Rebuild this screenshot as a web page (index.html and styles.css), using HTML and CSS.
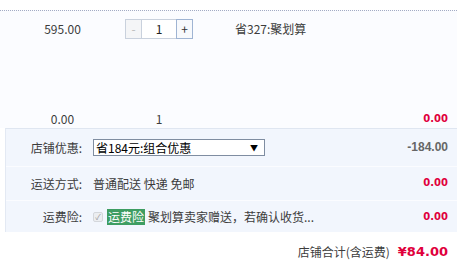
FILE: index.html
```html
<!DOCTYPE html>
<html>

<head>
    <meta charset="UTF-8">
    <title>购物车</title>
    <link rel="stylesheet" href="styles.css">
</head>

<body>
    <div class="order">
        <div class="item">
            <div class="item-top">
                <div class="col-price">595.00</div>
                <div class="qty">
                    <span class="qty-minus">-</span>
                    <span class="qty-num">1</span>
                    <span class="qty-plus">+</span>
                </div>
                <div class="col-promo">省327:聚划算</div>
            </div>
            <div class="item-bottom">
                <div class="col-price">0.00</div>
                <div class="col-qty">1</div>
                <div class="col-sum">0.00</div>
            </div>
        </div>
        <div class="shop">
            <div class="shop-row first">
                <div class="shop-label">店铺优惠:</div>
                <div class="shop-value">
                    <div class="select">省184元:组合优惠<span class="select-arrow">▼</span></div>
                </div>
                <div class="shop-price gray">-184.00</div>
            </div>
            <div class="shop-row">
                <div class="shop-label">运送方式:</div>
                <div class="shop-value">普通配送 快递 免邮</div>
                <div class="shop-price">0.00</div>
            </div>
            <div class="shop-row last">
                <div class="shop-label">运费险:</div>
                <div class="shop-value">
                    <span class="check">✓</span>
                    <span class="tag">运费险</span>
                    <span>聚划算卖家赠送，若确认收货...</span>
                </div>
                <div class="shop-price">0.00</div>
            </div>
        </div>
        <div class="total">
            <span>店铺合计(含运费)</span>
            <span class="total-price">¥84.00</span>
        </div>
    </div>
</body>

</html>
```

FILE: styles.css
```css
* {
    margin: 0;
    padding: 0;
}

body {
    background: #fff;
    font-family: "Noto Sans CJK SC", "Liberation Sans", sans-serif;
    font-size: 12px;
    color: #3c3c3c;
}

.order {
    width: 457px;
    padding-top: 10px;
}

/* 商品 */
.item {
    height: 117px;
    border-top: 1px dotted #a3abc4;
    background-color: #fbfcff;
    display: flex;
    flex-direction: column;
    justify-content: space-between;
}

.item-top {
    display: flex;
    align-items: center;
    padding-top: 8px;
}

.col-price {
    width: 125px;
    text-align: center;
    line-height: 20px;
}

.qty {
    display: flex;
    width: 68px;
    height: 20px;
    line-height: 18px;
}

.qty span {
    display: block;
    height: 18px;
    text-align: center;
    border: 1px solid #c9d1dd;
}

.qty-minus {
    width: 15px;
    color: #bbb;
    background-color: #f4f5f7;
}

.qty-num {
    width: 34px;
    color: #222;
    background-color: #fff;
    border-left: 0 none !important;
    border-right: 0 none !important;
}

.qty-plus {
    width: 15px;
    color: #333;
    background-color: #f7f9fc;
    border-color: #9fb4d3 !important;
}

.col-promo {
    margin-left: 42px;
    line-height: 20px;
}

.item-bottom {
    display: flex;
    align-items: center;
    height: 18px;
    line-height: 18px;
}

.col-qty {
    width: 68px;
    text-align: center;
}

.col-sum,
.shop-price {
    margin-left: auto;
    padding-right: 9px;
    font-family: "DejaVu Sans", sans-serif;
    font-weight: bold;
    font-size: 10px;
    color: #e0003c;
}

/* 店铺 */
.shop {
    margin-left: 5px;
    border-left: 1px solid #e3e9f3;
    border-top: 1px solid #dfe6f1;
    background-color: #f2f6fd;
}

.shop-row {
    display: flex;
    align-items: center;
    height: 33px;
    border-bottom: 1px solid #fbfcff;
}

.shop-row.first {
    height: 37px;
}

.shop-row.last {
    height: 31px;
    border-bottom: 0 none;
}

.shop-label {
    width: 76px;
    text-align: right;
}

.shop-value {
    margin-left: 11px;
    display: flex;
    align-items: center;
}

.shop-price {
    align-self: flex-start;
    padding-top: 10px;
}

.shop-price.gray {
    padding-top: 11px;
    font-family: "Liberation Sans", sans-serif;
    font-size: 12px;
    color: #666;
}

.select {
    position: relative;
    width: 168px;
    height: 15px;
    line-height: 15px;
    padding-left: 2px;
    border: 1px solid #7f8da1;
    background-color: #fff;
    color: #000;
}

.select-arrow {
    position: absolute;
    right: 6px;
    top: 0;
    font-size: 8px;
}

.check {
    display: block;
    width: 8px;
    height: 8px;
    line-height: 8px;
    font-size: 8px;
    text-align: center;
    color: #999;
    border: 1px solid #d4d7dc;
    background-color: #eceef1;
    border-radius: 2px;
}

.tag {
    margin-left: 4px;
    margin-right: 3px;
    padding: 0 1px;
    line-height: 16px;
    color: #fff;
    background-color: #3e9d62;
}

/* 合计 */
.total {
    display: flex;
    justify-content: flex-end;
    align-items: center;
    height: 38px;
    padding-right: 9px;
}

.total-price {
    margin-left: 8px;
    font-family: "DejaVu Sans", sans-serif;
    font-weight: bold;
    font-size: 13px;
    color: #e0003c;
}
```
